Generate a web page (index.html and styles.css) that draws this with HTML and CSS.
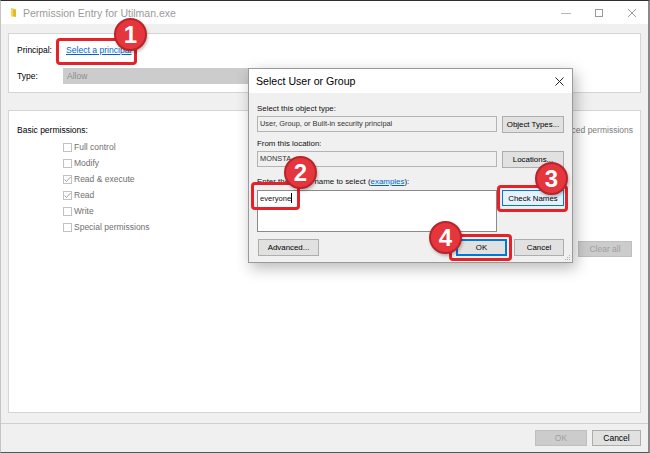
FILE: index.html
```html
<!DOCTYPE html>
<html>
<head>
<meta charset="utf-8">
<link rel="stylesheet" href="styles.css">
</head>
<body>
<div class="window">
  <div class="titlebar">
    <svg class="app-icon" width="8" height="11" viewBox="0 0 8 11"><path d="M1 1 L6 2.5 L6 10 L1 9 Z" fill="#e8b923"/><path d="M1 1 L1 9 L3 10 L3 2 Z" fill="#f5d46a"/></svg>
    <span class="title">Permission Entry for Utilman.exe</span>
    <div class="controls">
      <span class="ctl"><svg width="10" height="10" viewBox="0 0 10 10"><path d="M0 5.5 H10" stroke="#b5b5b5" stroke-width="1"/></svg></span>
      <span class="ctl"><svg width="10" height="10" viewBox="0 0 10 10"><rect x="1.5" y="1.5" width="7" height="7" fill="none" stroke="#999" stroke-width="1"/></svg></span>
      <span class="ctl"><svg width="10" height="10" viewBox="0 0 10 10"><path d="M1 1 L9 9 M9 1 L1 9" stroke="#999" stroke-width="1"/></svg></span>
    </div>
  </div>
  <div class="content">
    <section class="panel panel-top">
      <div class="field-grid">
        <span class="lbl">Principal:</span><a class="link principal-link">Select a principal</a>
        <span class="lbl">Type:</span><div class="combo">Allow</div>
      </div>
    </section>
    <section class="panel panel-perms">
      <div class="perms-left">
        <div class="perm-title">Basic permissions:</div>
        <ul class="checks">
          <li><span class="cb"></span>Full control</li>
          <li><span class="cb"></span>Modify</li>
          <li><span class="cb"><svg width="9" height="9" viewBox="0 0 9 9"><path d="M1.5 4.5 L3.5 6.5 L7.5 2" fill="none" stroke="#a0a0a0" stroke-width="1"/></svg></span>Read &amp; execute</li>
          <li><span class="cb"><svg width="9" height="9" viewBox="0 0 9 9"><path d="M1.5 4.5 L3.5 6.5 L7.5 2" fill="none" stroke="#a0a0a0" stroke-width="1"/></svg></span>Read</li>
          <li><span class="cb"></span>Write</li>
          <li><span class="cb"></span>Special permissions</li>
        </ul>
      </div>
      <div class="perms-right">
        <span class="adv-link">Show advanced permissions</span>
        <button class="btn btn-disabled clear-btn">Clear all</button>
      </div>
    </section>
  </div>
  <div class="footer">
    <button class="btn btn-disabled foot-ok">OK</button>
    <button class="btn foot-cancel">Cancel</button>
  </div>
</div>

<div class="dialog">
  <div class="dlg-title">
    <span>Select User or Group</span>
    <svg class="dlg-close" width="9" height="9" viewBox="0 0 9 9"><path d="M0.5 0.5 L8.5 8.5 M8.5 0.5 L0.5 8.5" stroke="#222" stroke-width="1"/></svg>
  </div>
  <div class="dlg-body">
    <div class="dlg-label">Select this object type:</div>
    <div class="dlg-row">
      <div class="ro-box">User, Group, or Built-in security principal</div>
      <button class="btn dbtn">Object Types...</button>
    </div>
    <div class="dlg-label gap-top">From this location:</div>
    <div class="dlg-row">
      <div class="ro-box">MONSTA</div>
      <button class="btn dbtn">Locations...</button>
    </div>
    <div class="dlg-label gap-top2">Enter the object name to select (<a class="link">examples</a>):</div>
    <div class="dlg-row tall">
      <div class="names-box">everyone<span class="caret"></span></div>
      <button class="btn dbtn focus-btn">Check Names</button>
    </div>
    <div class="dlg-actions">
      <button class="btn dbtn adv-btn">Advanced...</button>
      <div class="spacer"></div>
      <button class="btn dbtn ok-btn">OK</button>
      <button class="btn dbtn cancel-btn">Cancel</button>
    </div>
  </div>
  <svg class="grip" width="7" height="7" viewBox="0 0 7 7"><g fill="#b0b0b0"><rect x="5" y="1" width="1" height="1"/><rect x="3" y="3" width="1" height="1"/><rect x="5" y="3" width="1" height="1"/><rect x="1" y="5" width="1" height="1"/><rect x="3" y="5" width="1" height="1"/><rect x="5" y="5" width="1" height="1"/></g></svg>
</div>

<div class="mark m1"></div>
<div class="mark m2"></div>
<div class="mark m3"></div>
<div class="mark m4"></div>
<div class="badge b1">1</div>
<div class="badge b2">2</div>
<div class="badge b3">3</div>
<div class="badge b4">4</div>
</body>
</html>
```
FILE: styles.css
```css
* { box-sizing: border-box; }
html, body { margin: 0; padding: 0; }
body {
  width: 650px; height: 453px; overflow: hidden; position: relative;
  background: #3a3a3a;
  font-family: "Liberation Sans", Arial, sans-serif;
  font-size: 8.5px; color: #000;
}
.window {
  width: 650px; height: 453px;
  display: flex; flex-direction: column;
  background: #f0f0f0;
  border-top: 1px solid #2e2e2e;
  border-left: 1px solid #c4c4c4;
  border-right: 2px solid #8a8a8a;
  border-bottom: 1px solid #555;
}
.titlebar {
  height: 23px; flex: none; background: #fff;
  display: flex; align-items: center;
}
.app-icon { margin-left: 9px; margin-right: 5px; }
.title { font-size: 10.5px; color: #9a9a9a; }
.controls { margin-left: auto; display: flex; }
.ctl { width: 33px; height: 23px; display: flex; align-items: center; justify-content: center; }

.content {
  flex: 1; display: flex; flex-direction: column; gap: 17px;
  padding: 9px 7px 10px 7px;
}
.panel { background: #fff; border: 1px solid #d5d5d5; }
.panel-top { height: 60px; padding: 6px 0 0 8px; }
.field-grid {
  display: grid; grid-template-columns: 46px 200px;
  grid-template-rows: 20px 16px; row-gap: 8px; align-items: center;
}
.link { color: #0066cc; text-decoration: underline; }
.principal-link { padding-left: 3px; font-size: 8.6px; }
.combo {
  height: 16px; background: #cccccc; color: #8c8c8c;
  padding-left: 4px; line-height: 16px;
}
.panel-perms {
  flex: 1; display: flex; justify-content: space-between;
  padding: 13px 7px 0 8px;
}
.perm-title { line-height: 12px; }
.checks { list-style: none; margin: 3px 0 0; padding: 0 0 0 46px; }
.checks li { height: 16px; display: flex; align-items: center; color: #707070; }
.cb {
  width: 9px; height: 9px; border: 1px solid #c2c2c2; background: #fff;
  margin-right: 2px; display: flex; align-items: center; justify-content: center;
}
.cb svg { flex: none; }
.perms-right { display: flex; flex-direction: column; align-items: flex-end; }
.adv-link { line-height: 12px; color: #7b7b7b; }
.btn {
  font-family: "Liberation Sans", Arial, sans-serif; font-size: 8.5px;
  background: #e1e1e1; border: 1px solid #adadad; color: #000;
  padding: 0; margin: 0; height: 17px;
}
.btn-disabled { background: #cccccc; border-color: #bfbfbf; color: #a0a0a0; }
.clear-btn { width: 54px; margin-top: 105px; margin-right: 1px; height: 16px; }

.footer {
  height: 29px; flex: none; border-top: 1px solid #cfcfcf;
  display: flex; justify-content: flex-end; align-items: flex-start;
  gap: 5px; padding: 6px 7px 0 0;
}
.foot-ok { width: 52px; height: 16px; }
.foot-cancel { width: 49px; height: 16px; }

/* Overlay dialog */
.dialog {
  position: absolute; left: 248px; top: 68px; width: 325px; height: 195px;
  background: #f0f0f0; border: 1px solid #9a9a9a;
  box-shadow: 3px 5px 14px rgba(0,0,0,0.28);
  display: flex; flex-direction: column;
}
.dlg-title {
  height: 24px; flex: none; background: #fff;
  display: flex; align-items: center; justify-content: space-between;
  padding: 0 8px 0 7px; font-size: 10.6px;
}
.dlg-close { margin-right: 0; }
.dlg-body { padding: 10px 8px 0 8px; font-size: 7.9px; }
.dlg-label { line-height: 12px; margin-bottom: 1px; color: #111; }
.gap-top { margin-top: 6px; margin-bottom: 1px; }
.gap-top2 { margin-top: 9px; margin-bottom: 2px; }
.dlg-row { display: grid; grid-template-columns: 240px 62px; column-gap: 5px; height: 16px; }
.dlg-row.tall { height: 42px; align-items: start; }
.ro-box {
  height: 16px; background: #f0f0f0; border: 1px solid #b4b4b4;
  padding-left: 2px; line-height: 14px; color: #333; font-size: 7.4px;
}
.names-box {
  height: 42px; background: #fff; border: 1px solid #8a8a8a;
  padding: 2px 2px; line-height: 12px; font-size: 7.6px; color: #111;
}
.caret { display: inline-block; width: 1px; height: 10px; background: #000; vertical-align: -2px; }
.dbtn { font-size: 7.9px; height: 17px; }
.focus-btn { height: 16px; background: #e5f1fb; border-color: #0078d7; }
.dlg-actions { display: flex; gap: 7px; margin-top: 7px; height: 17px; }
.adv-btn { width: 61px; margin-left: 1px; }
.spacer { flex: 1; }
.ok-btn { width: 51px; border-color: #0078d7; box-shadow: inset 0 0 0 1px #0078d7; }
.cancel-btn { width: 50px; }
.grip { position: absolute; right: 1px; bottom: 1px; }

/* Red annotations */
.mark {
  position: absolute; border: 3px solid #e52228; border-radius: 4px;
}
.m1 { left: 56px; top: 38px; width: 81px; height: 27px; }
.m2 { left: 251px; top: 182px; width: 49px; height: 28px; }
.m3 { left: 497px; top: 185px; width: 71px; height: 27px; }
.m4 { left: 449px; top: 234px; width: 63px; height: 27px; }
.badge {
  position: absolute; width: 33px; height: 33px; border-radius: 50%;
  background: #e4363c; border: 2px solid #b9242a;
  box-shadow: 1px 2px 3px rgba(0,0,0,0.25);
  color: #fff; font-weight: bold; font-size: 24px;
  display: flex; align-items: center; justify-content: center;
  font-family: "Liberation Sans", Arial, sans-serif;
}
.b1 { left: 114px; top: 18px; }
.b2 { left: 284px; top: 156px; }
.b3 { left: 535px; top: 162px; }
.b4 { left: 429px; top: 221px; }
```
